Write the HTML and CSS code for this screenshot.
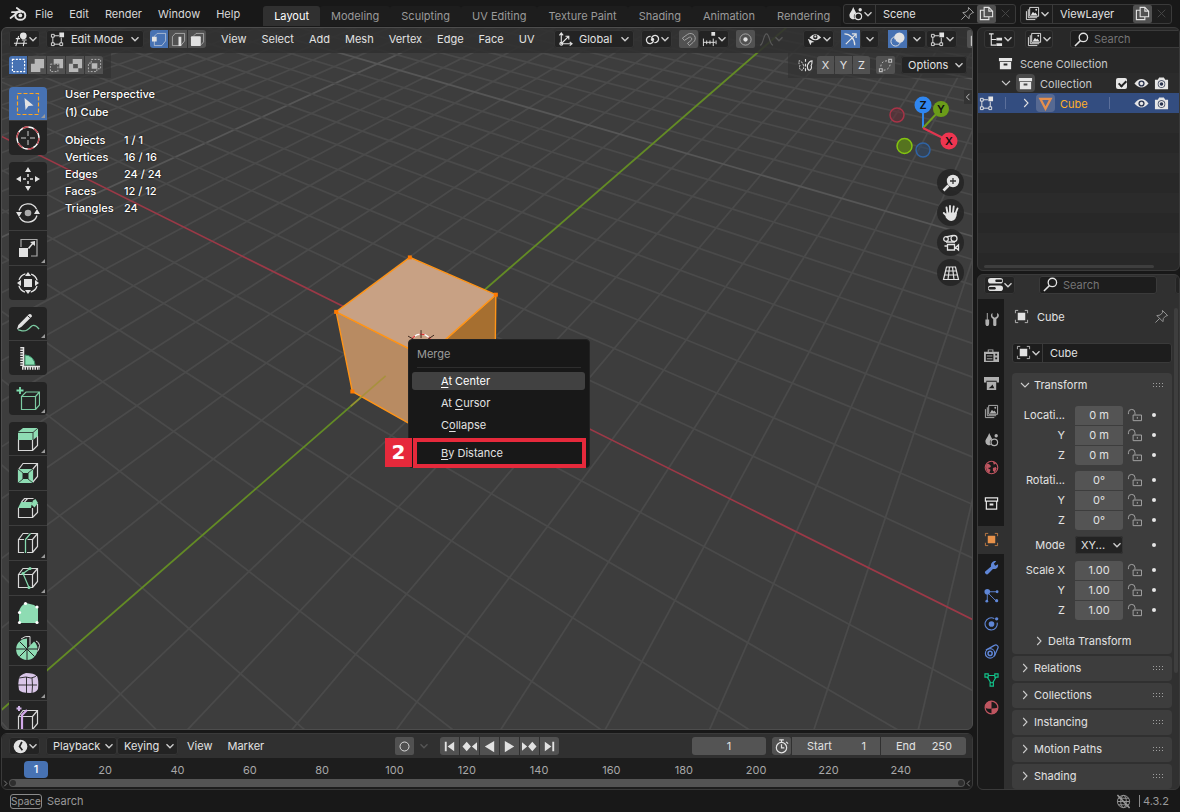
FILE: index.html
```html
<!DOCTYPE html>
<html lang="en">
<head>
<meta charset="utf-8">
<title>Blender</title>
<link rel="stylesheet" href="styles.css">
</head>
<body>
<svg class="sprite" aria-hidden="true">
  <symbol id="logo" viewBox="0 0 18 16"><g fill="none" stroke="currentColor" stroke-linecap="round"><ellipse cx="11.3" cy="9.4" rx="5" ry="4.4" stroke-width="2"/><path d="M1.6 12L8.5 6.6M3 6.2h8M7.8 2l5.8 4.2" stroke-width="1.8"/></g><circle cx="11.3" cy="9.4" r="1.9" fill="currentColor"/></symbol>
  <symbol id="chev" viewBox="0 0 10 10"><path d="M1.5 3.2L5 6.7l3.5-3.5" fill="none" stroke="currentColor" stroke-width="1.4"/></symbol>
  <symbol id="chevr" viewBox="0 0 10 10"><path d="M3.2 1L7 5 3.2 9" fill="none" stroke="currentColor" stroke-width="1.1"/></symbol>
  <symbol id="chevd" viewBox="0 0 10 10"><path d="M1 3l4 4 4-4" fill="none" stroke="currentColor" stroke-width="1.1"/></symbol>
  <symbol id="ed3d" viewBox="0 0 16 16"><path d="M3 7h4.500M1 12h14M6 4.500L3 15M12 9.500l-1 5.500M9.500 8.500h5" fill="none" stroke="currentColor" stroke-width="1.2"/><circle cx="11" cy="4" r="3.6" fill="currentColor"/></symbol>
  <symbol id="editmesh" viewBox="0 0 16 16"><g fill="none" stroke="currentColor"><path d="M1.5 2.5h3v3h-3zM1.5 11.5h3v3h-3zM10.5 11.5h3v3h-3zM4.5 4h5M3 5.5v6M4.5 13h6M12 6v5.5"/></g><path d="M10 .5h5v5h-5z" fill="currentColor"/></symbol>
  <symbol id="selv" viewBox="0 0 16 16"><path d="M2.500 4.500l3-3h9v8l-4 5h-8z" fill="none" stroke="currentColor" opacity=".65"/><path d="M0 5h5v5h-5z" fill="currentColor"/></symbol>
  <symbol id="sele" viewBox="0 0 16 16"><path d="M1.500 5l3-3.500h10v8l-4 5h-9z" fill="none" stroke="currentColor" opacity=".6"/><path d="M8 5h3v10h-3z" fill="currentColor"/></symbol>
  <symbol id="self" viewBox="0 0 16 16"><path d="M4 4l2.500-2.500h8v9l-2.500 3" fill="none" stroke="currentColor" opacity=".6"/><rect x="1" y="4.500" width="10.500" height="10.500" rx="1" fill="currentColor"/></symbol>
  <symbol id="axes" viewBox="0 0 16 16"><g fill="none" stroke="currentColor" stroke-width="1.2"><path d="M3.500 1v11.500H15M1.500 3.500l2-2.500 2 2.500M12.500 10.500l2.500 2-2.500 2M4 12L11 5M8 4.500h3.500V8"/><circle cx="3.500" cy="12.500" r="1.500"/></g></symbol>
  <symbol id="link" viewBox="0 0 16 16"><g fill="none" stroke="currentColor" stroke-width="1.4"><path d="M7 6.500a3.800 3.800 0 1 1 5 4.500l-2 .3"/><path d="M9 9.500a3.800 3.800 0 1 1-5-4.500l2-.3"/></g><circle cx="8" cy="8" r="1.800" fill="currentColor"/></symbol>
  <symbol id="magnet" viewBox="0 0 16 16"><path d="M1.500 6.500l5.500-4a5.200 5.200 0 0 1 6 8.500l-4 3.500-2-2.500 4-3.200a2 2 0 0 0-2.200-3.200L3.500 9z" fill="none" stroke="currentColor"/></symbol>
  <symbol id="snapinc" viewBox="0 0 16 16"><path d="M1.500 7v8M5 9v4M8.500 9v4M12 7v8M1.500 11H14.500M15 9v4" fill="none" stroke="currentColor"/><path d="M10 0h4v4h-4z" fill="currentColor"/></symbol>
  <symbol id="prop" viewBox="0 0 16 16"><circle cx="8" cy="8" r="6" fill="none" stroke="currentColor" opacity=".6"/><circle cx="8" cy="8" r="2.300" fill="currentColor"/></symbol>
  <symbol id="curve" viewBox="0 0 16 16"><path d="M1 14c4 0 3.500-12 7-12s3 12 7 12" fill="none" stroke="currentColor" stroke-width="1.200"/></symbol>
  <symbol id="visib" viewBox="0 0 18 16"><path d="M3 5.500Q10 -2 17 5.500Q10 12 3 5.500z" fill="currentColor"/><circle cx="10" cy="5" r="2.700" fill="#282828"/><circle cx="10" cy="4.500" r="1.200" fill="currentColor"/><path d="M1 7l3 8 1.500-3.500L9 11z" fill="currentColor"/></symbol>
  <symbol id="gizmo" viewBox="0 0 16 16"><path d="M1.500 2c6 0 11 5 11 12M3 13L13.500 2.500M9.500 2h4.500v4.500" fill="none" stroke="currentColor" stroke-width="1.300"/></symbol>
  <symbol id="overlay" viewBox="0 0 16 16"><circle cx="6" cy="10" r="5" fill="none" stroke="currentColor"/><circle cx="10" cy="6" r="5.500" fill="currentColor"/><path d="M5 7.500a5 5 0 0 0 4 4" fill="none" stroke="#4772b3"/></symbol>
  <symbol id="xray" viewBox="0 0 16 16"><path d="M2.500 4.500h9v10h-9zM5 4V1.500h9.500v10H12M7 7v5" fill="none" stroke="currentColor"/></symbol>
  <symbol id="bfly" viewBox="0 0 16 16"><path d="M8 1v3M8 6v3M8 11v3M10 8c2-5 4-5 5-5 0 3 0 4-1 5 1 2 0 5-2 5s-2-2-2-5" fill="none" stroke="currentColor" stroke-width="1.200"/><path d="M6 8C4 3 2 3 1 3c0 3 0 4 1 5-1 2 0 5 2 5s2-2 2-5" fill="none" stroke="currentColor" stroke-dasharray="2 1"/></symbol>
  <symbol id="autom" viewBox="0 0 16 16"><path d="M1.500 11.500h3v3h-3zM11.500 1.500h3v3h-3z" fill="none" stroke="currentColor" stroke-width="1.200"/><path d="M3 9c0-4 3-6 7-6M6 13c4 0 7-3 7-7" fill="none" stroke="currentColor" stroke-dasharray="2 2"/></symbol>
  <symbol id="snew" viewBox="0 0 16 16"><path d="M1.500 1.500h13v13h-13z" fill="none" stroke="currentColor" stroke-width="1.200" stroke-dasharray="2.200 1.400"/></symbol>
  <symbol id="sadd" viewBox="0 0 16 16"><path d="M5 1h10v10h-4v4H1V6h4z" fill="currentColor"/></symbol>
  <symbol id="ssub" viewBox="0 0 16 16"><path d="M5 1h10v10h-4V6H5z" fill="currentColor"/><path d="M1.500 6.500h8v8h-8z" fill="none" stroke="currentColor" stroke-dasharray="2 1.500"/></symbol>
  <symbol id="sdif" viewBox="0 0 16 16"><path fill-rule="evenodd" d="M5 1h10v10h-4v4H1V6h4zM5.500 6.500v4.500h5V6.500z" fill="currentColor"/></symbol>
  <symbol id="sand" viewBox="0 0 16 16"><path d="M5 5.500h6v6H5z" fill="currentColor"/><path d="M4.500 5V1.500h10v10H11M4 5.500H1.500v9h9V12" fill="none" stroke="currentColor" stroke-dasharray="2 1.500"/></symbol>
  <symbol id="scene" viewBox="0 0 16 16"><path d="M5.500 1l3.500 7a3 3 0 0 0-1.500 5.500A4 4 0 0 1 1.500 10c0-2.500 3-5 4-9z" fill="currentColor"/><circle cx="11" cy="11" r="3.500" fill="none" stroke="currentColor" stroke-width="1.300"/><circle cx="13" cy="4" r="1.800" fill="currentColor"/></symbol>
  <symbol id="layers" viewBox="0 0 16 16"><path d="M5 1.500h9.500V11H5zM3.500 3.500v9H13M1.500 5.500v9H11" fill="none" stroke="currentColor"/><path d="M6 10l2.500-4L10 8l1-1 2.500 3z" fill="currentColor"/><circle cx="12" cy="4" r="1" fill="currentColor"/></symbol>
  <symbol id="pin" viewBox="0 0 16 16"><path d="M9 1.500l5.500 5.500-2 .5-2.500 2.500-.5 3.500L3 7l3.500-.5L9 4zM6 10l-4.500 4.500" fill="none" stroke="currentColor"/></symbol>
  <symbol id="copy" viewBox="0 0 16 16"><path d="M5.500 1.500h5l4 4v6h-9zM10.500 1.500v4h4M5 4.500H1.500v10h9V12" fill="none" stroke="currentColor" stroke-width="1.200"/></symbol>
  <symbol id="x" viewBox="0 0 16 16"><path d="M4 4l8 8M12 4l-8 8" stroke="currentColor"/></symbol>
  <symbol id="tree" viewBox="0 0 16 16"><path d="M3.500 2v12H9M3.500 8H9M1 2h5" fill="none" stroke="currentColor" stroke-width="1.200"/><path d="M9 6h6v3H9zM9 12h6v3H9z" fill="currentColor"/></symbol>
  <symbol id="search" viewBox="0 0 16 16"><circle cx="10" cy="5.800" r="4.500" fill="none" stroke="currentColor" stroke-width="1.400"/><path d="M6.800 9.200L1 15" stroke="currentColor" stroke-width="1.600"/></symbol>
  <symbol id="coll" viewBox="0 0 16 16"><path d="M1 2h14v3.500H1z" fill="currentColor"/><path fill-rule="evenodd" d="M2 6.500h12V14H2zM6 8v2h4V8z" fill="currentColor"/></symbol>
  <symbol id="collo" viewBox="0 0 16 16"><path d="M1.500 2h13v3.500h-13zM2.500 5.500h11V14h-11z" fill="none" stroke="currentColor" stroke-width="1.300"/><path d="M6 8h4v2H6z" fill="currentColor"/></symbol>
  <symbol id="eye" viewBox="0 0 16 16"><path d="M0.500 8Q8 -1.500 15.500 8Q8 16.500 .5 8z" fill="currentColor"/><circle cx="8" cy="8" r="3.300" fill="#2b3550"/><circle cx="8" cy="8" r="1.800" fill="currentColor"/></symbol>
  <symbol id="cam" viewBox="0 0 16 16"><path d="M1 4h3l1.500-2.500h5L12 4h3v10H1z" fill="currentColor"/><circle cx="8" cy="8.500" r="4" fill="#2b3550"/><circle cx="8" cy="8.500" r="2.600" fill="none" stroke="currentColor" stroke-width="1.400"/></symbol>
  <symbol id="mesh" viewBox="0 0 16 16"><path d="M2.500 3h11L8 13.500z" fill="none" stroke="#e58f4d" stroke-width="2.400"/></symbol>
  <symbol id="propsed" viewBox="0 0 16 16"><rect x="0" y="1" width="16" height="6" rx="3" fill="currentColor"/><rect x="0" y="9" width="16" height="6" rx="3" fill="currentColor"/><path d="M9 4h5" stroke="#222" stroke-width="2.500" stroke-linecap="round"/><path d="M2 12h5" stroke="#222" stroke-width="2.500" stroke-linecap="round"/></symbol>
  <symbol id="obj" viewBox="0 0 16 16"><path d="M4 4h8v8H4z" fill="currentColor"/><path d="M1.500 4.500v-3h3M11.500 1.500h3v3M14.500 11.500v3h-3M4.500 14.500h-3v-3" fill="none" stroke="currentColor" opacity=".75"/></symbol>
  <symbol id="toolp" viewBox="0 0 16 16"><path d="M3 1h1v7h1.500v4q0 3-2 3t-2-3V8H3z" fill="currentColor"/><path d="M9 1v3.500L11.500 6 14 4.500V1c3 1.500 2 5-.8 6.500V14q-1.700 2-3.400 0V7.500C7 6 6.500 2.500 9 1z" fill="currentColor"/></symbol>
  <symbol id="render" viewBox="0 0 16 16"><path fill-rule="evenodd" d="M0 4h4V1.500h6V4h6v11H0zM2 6.500v7h8v-7zM5 2.500V4h4V2.500zM12 6v2h2V6zM12 10v2h2v-2z" fill="currentColor"/><path d="M3 8.500h6M3 11.500h6" stroke="currentColor"/></symbol>
  <symbol id="output" viewBox="0 0 16 16"><path d="M0 1h16v6h-2.500V5h-11v2H0z" fill="currentColor"/><path fill-rule="evenodd" d="M3 6h10v9H3zM5 13h6L9 9l-1.500 2z" fill="currentColor"/></symbol>
  <symbol id="world" viewBox="0 0 16 16"><circle cx="8" cy="8" r="6.700" fill="none" stroke="currentColor" stroke-width="1.200"/><path d="M2.500 4.500L5 4l2.500 2.500-1 1.500-2.500.5 3 2-1.500 3.500C3 12.500 1.500 9 2.500 4.500zM9.500 8.500l3-1 1 1.500-2 4-2-1.500zM9.500 1.500l3.500 2L10.500 5z" fill="currentColor"/></symbol>
  <symbol id="wrench" viewBox="0 0 16 16"><path d="M1 12.500L7.500 7C6.800 3.500 9.500.5 13 1.200L10.500 4l1.500 2 3-1.500c.5 3.500-2 6-5.500 5L4 15.300C2.500 16 .5 14 1 12.500z" fill="currentColor"/></symbol>
  <symbol id="parts" viewBox="0 0 16 16"><circle cx="3.500" cy="4" r="3" fill="currentColor"/><path d="M3.500 6v8M6 4h8M5 6l8 8" stroke="currentColor"/><circle cx="3" cy="14" r="1.500" fill="currentColor"/><circle cx="13.500" cy="13.500" r="1.700" fill="currentColor"/><circle cx="14" cy="4" r="1.500" fill="currentColor"/></symbol>
  <symbol id="phys" viewBox="0 0 16 16"><path d="M11 2.800A6.500 6.500 0 1 0 14 7" fill="none" stroke="currentColor" stroke-width="1.200"/><circle cx="8" cy="8.500" r="3" fill="currentColor"/><circle cx="13.500" cy="3" r="1.800" fill="currentColor"/></symbol>
  <symbol id="constr" viewBox="0 0 16 16"><path d="M2 6.500L11 1.500a2.500 2.500 0 0 1 3.500 3.500L11 13" fill="none" stroke="currentColor" stroke-width="1.300"/><circle cx="6.500" cy="10" r="5" fill="none" stroke="currentColor" stroke-width="1.300"/><circle cx="6.500" cy="10" r="2.200" fill="none" stroke="currentColor" stroke-width="1.600"/></symbol>
  <symbol id="meshd" viewBox="0 0 16 16"><path d="M1 2h3.500v3.500H1zM11.500 2H15v3.500h-3.500zM6.500 11.500H10V15H6.500zM4.500 3.700h7M3.500 5.500l3.700 6M12.800 5.500l-3.500 6" fill="none" stroke="currentColor" stroke-width="1.200"/></symbol>
  <symbol id="mat" viewBox="0 0 16 16"><circle cx="8" cy="8" r="6.800" fill="none" stroke="currentColor" stroke-width="1.300"/><path d="M8 1a7 7 0 0 0-7 7q3 2 7 1zM8 9q4 0 7-1a7 7 0 0 1-7 7z" fill="currentColor"/></symbol>
  <symbol id="lock" viewBox="0 0 16 16"><path d="M6.500 7.500h9v6h-9zM8.500 7V5a3.500 3.500 0 0 0-7 0v1.500M11 9.500v2" fill="none" stroke="currentColor"/></symbol>
  <symbol id="grip" viewBox="0 0 12 6"><path d="M0 1.500h12M0 4.500h12" stroke="currentColor" stroke-width="1" stroke-dasharray="1 2"/></symbol>
  <symbol id="clock" viewBox="0 0 16 16"><circle cx="8" cy="8" r="7.300" fill="currentColor"/><path d="M9.500 3L7 8l3 4" fill="none" stroke="#232323" stroke-width="1.800"/></symbol>
  <symbol id="ring" viewBox="0 0 16 16"><circle cx="8" cy="8" r="4.800" fill="none" stroke="currentColor"/></symbol>
  <symbol id="tfirst" viewBox="0 0 16 16"><path d="M3 3h2v10H3zM13 3v10L6 8z" fill="currentColor"/></symbol>
  <symbol id="tprev" viewBox="0 0 16 16"><path d="M5 3l4.500 5L5 13 .5 8zM16 3.500v9L10.500 8z" fill="currentColor"/></symbol>
  <symbol id="tback" viewBox="0 0 16 16"><path d="M13 2v12L3 8z" fill="currentColor"/></symbol>
  <symbol id="stopw" viewBox="0 0 16 16"><circle cx="8" cy="9.200" r="5.500" fill="none" stroke="currentColor" stroke-width="1.300"/><path d="M5.500 1h5M8 1v3M8 5.500v4h3M13 3l2 2" fill="none" stroke="currentColor" stroke-width="1.300"/></symbol>
  <symbol id="net" viewBox="0 0 16 16"><g fill="none" stroke="currentColor"><circle cx="8" cy="8" r="6.500"/><ellipse cx="8" cy="8" rx="3" ry="6.500"/><path d="M1.500 8h13M2.500 4.500h11M2.500 11.500h11"/><path d="M1.500 1l13 14" stroke-width="1.600"/></g></symbol>
  <symbol id="t-select" viewBox="0 0 24 24"><path d="M1.500 1.500h21v21h-21z" fill="none" stroke="#ffa51f" stroke-width="1.200" stroke-dasharray="4 2"/><path d="M8.500 6l9 7.500-5 .5-3 4z" fill="currentColor"/></symbol>
  <symbol id="t-cursor" viewBox="0 0 24 24"><circle cx="12" cy="12" r="11" fill="none" stroke="#fff" stroke-width="1.300"/><circle cx="12" cy="12" r="11" fill="none" stroke="#c0404a" stroke-width="1.300" stroke-dasharray="6 5.500"/><path d="M12 5v5M12 14v5M5 12h5M14 12h5" stroke="#ccc"/></symbol>
  <symbol id="t-move" viewBox="0 0 24 24"><path d="M12 0l3 5H9zM12 24l3-5H9zM0 12l5-3v6zM24 12l-5-3v6z" fill="currentColor"/><path d="M12 7v3M12 14v3M7 12h3M14 12h3" stroke="currentColor" stroke-width="1.500"/></symbol>
  <symbol id="t-rot" viewBox="0 0 24 24"><circle cx="12" cy="12" r="3.300" fill="#aaa"/><path d="M3 9.500A9.500 9.500 0 0 1 20.500 8M3.500 16A9.500 9.500 0 0 0 21 14.500" fill="none" stroke="currentColor" stroke-width="1.300"/><path d="M0 11h6l-3 5zM18 13h6l-3-5z" fill="currentColor"/></symbol>
  <symbol id="t-scale" viewBox="0 0 24 24"><path d="M5 11V3.500h16V20h-6" fill="none" stroke="#aaa" stroke-width="1.200"/><path d="M3 12h9v9H3z" fill="currentColor"/><path d="M12.500 12.500l5-6" stroke="currentColor" stroke-width="1.500"/><path d="M19 5v5l-5-4z" fill="currentColor"/></symbol>
  <symbol id="t-trans" viewBox="0 0 24 24"><circle cx="12" cy="12" r="9.500" fill="none" stroke="currentColor" stroke-width="1.300" stroke-dasharray="9 5.900" stroke-dashoffset="-3"/><path d="M8 8h8v8H8z" fill="currentColor"/><path d="M12 1l3 4H9zM12 23l3-4H9zM1 12l4-3v6zM23 12l-4-3v6z" fill="currentColor"/></symbol>
  <symbol id="t-anno" viewBox="0 0 26 24"><path d="M2 18.500c2-1 5 3 10 0s4-5 7-5q3 0 6 4" fill="none" stroke="#7ccba2" stroke-width="1.400"/><path d="M1 18l1.500-5L14 1.500q2.500-1 3.500 2L6 15z" fill="currentColor"/><path d="M12.500 3l3.500 3" stroke="#242424"/></symbol>
  <symbol id="t-meas" viewBox="0 0 24 24"><path d="M9 19V9a10 10 0 0 1 10 10z" fill="#86dcb0" stroke="#3d8f69"/><path d="M6 1v20M6 22h18" stroke="currentColor" stroke-width="3.500" stroke-dasharray="1.500 1"/><path d="M7.500 1v19.500H24" fill="none" stroke="currentColor" stroke-width="1.500"/></symbol>
  <symbol id="t-addc" viewBox="0 0 24 24"><path d="M5.500 9.500h14v13h-14zM5.500 9.500l4.500-4.500h13.500v13l-4 4.500M19.500 9.500L23.500 5" fill="none" stroke="#7ccba2" stroke-width="1.200"/><path d="M4 0v7M.5 3.500h7" stroke="#7fe0b0" stroke-width="1.800"/></symbol>
  <symbol id="cubeo" viewBox="0 0 24 24"><path d="M2.500 8.500h14v13h-14zM2.500 8.500L7 2.500h14.500v13l-5 6M16.500 8.500l5-6" fill="none" stroke="#d8d8d8" stroke-width="1.200"/></symbol>
  <symbol id="t-ext" viewBox="0 0 24 24"><path d="M2.500 12v11.500h14V12M16.500 23.500l5-5V9" fill="none" stroke="#d8d8d8" stroke-width="1.200"/><path d="M2 5l5-4h15v8l-5 4H2z" fill="#8edcb3"/><path d="M2 5.500h15l5-4.500M17 5.500V13" fill="none" stroke="#242424" stroke-width=".8"/></symbol>
  <symbol id="t-inset" viewBox="0 0 24 24"><use href="#cubeo"/><path fill-rule="evenodd" d="M2 8h15v14H2zM6.500 12v6h6v-6z" fill="#8edcb3"/><path d="M2 8l5 4M17 8l-5 4M2 22l5-4M17 22l-5-4" stroke="#222" stroke-width=".8"/></symbol>
  <symbol id="t-bevel" viewBox="0 0 24 24"><path d="M2.500 12v9.500h14V12M16.500 21.500l5-5V8M5.500 6l3-3.500h9M8.500 6l3-3.500" fill="none" stroke="#d8d8d8" stroke-width="1.200"/><path d="M5 6h11l-1 6H2zM17 4.500l2.500-1.500 2.500 4-3.500 4.500-3-3z" fill="#8edcb3"/></symbol>
  <symbol id="t-loop" viewBox="0 0 24 24"><use href="#cubeo"/><path d="M9.500 22V8.500L14.500 2.500" fill="none" stroke="#222" stroke-width="3"/><path d="M9.500 22V8.500L14.500 2.500" fill="none" stroke="#86dcb0" stroke-width="1.300"/></symbol>
  <symbol id="t-knife" viewBox="0 0 24 24"><use href="#cubeo"/><path d="M14 2.500L7 7.500l6 14" fill="none" stroke="#86dcb0" stroke-width="1.200"/><g fill="#86dcb0"><circle cx="14" cy="2.500" r="1.600"/><circle cx="7" cy="7.500" r="1.600"/><circle cx="13" cy="21.500" r="1.600"/></g></symbol>
  <symbol id="t-poly" viewBox="0 0 24 24"><path d="M10 2l8 2 4 3v15H3V10q2-6 7-8z" fill="#8edcb3"/><g fill="#fff"><circle cx="9.500" cy="2.500" r="1.600"/><circle cx="21" cy="6" r="1.600"/><circle cx="3.500" cy="11.500" r="1.600"/><circle cx="3.500" cy="21.500" r="1.600"/><circle cx="21" cy="21.500" r="1.600"/></g></symbol>
  <symbol id="t-spin" viewBox="0 0 24 24"><path d="M11 13V2.500A10.700 10.700 0 1 0 21.500 13L18 6z" fill="#8edcb3"/><path d="M11 2.500V13l7-7.500L22 13h-2z" fill="#242424"/><path d="M11 13l7-7.500q3.500 3 3.500 7.500z" fill="#8edcb3"/><path d="M11 13V24M11 13L3.500 20.500M11 13l7.500 7.500M11 13H0M11 13h11M11 13L3.500 5.500" stroke="#242424"/><path d="M5 3Q9-.5 14 .5v9M20 5q3 1 3.500 4.500-.5 4-2 6" fill="none" stroke="#ddd"/></symbol>
  <symbol id="t-smooth" viewBox="0 0 24 24"><path d="M3 7q1-3 7-5 8 0 11 3 2 4 1 13-2 4-8 4-9 0-11-3-1.500-6 0-12z" fill="#d9c6e8"/><path d="M3 7q8-2 12 0 5-1 6-3M10.500 6v16M2 14h19M16 7q1 8 0 15" fill="none" stroke="#222" stroke-width=".9"/></symbol>
  <symbol id="t-slide" viewBox="0 0 24 24"><use href="#cubeo" y="2"/><path d="M6 23V9l5-5" fill="none" stroke="#d2a9ea" stroke-width="2.200"/><path d="M3 0v5M.5 2.500h5" stroke="#d2b5ea" stroke-width="2"/></symbol>
  <symbol id="v-zoom" viewBox="0 0 18 18"><circle cx="11" cy="7" r="6.200" fill="currentColor"/><path d="M6.500 11.500L1.500 16.500" stroke="currentColor" stroke-width="2.600"/><path d="M11 4v6M8 7h6" stroke="#333" stroke-width="1.300"/></symbol>
  <symbol id="v-hand" viewBox="0 0 18 18"><path d="M5.500 9L4.500 3.500M8 8.500V2M11 8.500l.7-6M13.500 9.500l2-5M6 13L1.800 9" stroke="currentColor" stroke-width="1.900" stroke-linecap="round"/><path d="M4.500 8.500h10.500q-.5 8-5.500 8.500-3.500 0-6-4z" fill="currentColor"/></symbol>
  <symbol id="v-cam" viewBox="0 0 18 18"><g fill="none" stroke="currentColor" stroke-width="1.300"><circle cx="4" cy="5" r="2.300"/><circle cx="12" cy="4.500" r="3"/><path d="M4 2.800L11 1.500M4 8h9M5.500 10.500h7v5.500h-7zM2.500 12h3M16.500 11v5l-3-2.500z"/></g></symbol>
  <symbol id="v-grid" viewBox="0 0 18 18"><path d="M4.500 3h9l3 12.500h-15zM3.500 7h11M2.500 11h13M7.500 3l-1.500 12.500M10.500 3l1.500 12.500" fill="none" stroke="currentColor" stroke-width="1.200"/></symbol>
</svg>

<div class="app">
  <header class="topbar">
    <svg class="logo"><use href="#logo"/></svg>
    <nav class="menus" aria-label="Main menu">
      <button>File</button><button>Edit</button><button>Render</button><button>Window</button><button>Help</button>
    </nav>
    <div class="tabs" role="tablist">
      <button class="tab active" role="tab">Layout</button><button class="tab" role="tab">Modeling</button><button class="tab" role="tab">Sculpting</button><button class="tab" role="tab">UV Editing</button><button class="tab" role="tab">Texture Paint</button><button class="tab" role="tab">Shading</button><button class="tab" role="tab">Animation</button><button class="tab" role="tab">Rendering</button>
    </div>
    <div class="datablock scene">
      <button class="drop" aria-label="Browse scene"><svg class="ic"><use href="#scene"/></svg><svg class="chev"><use href="#chev"/></svg></button>
      <input aria-label="Scene name" value="Scene">
      <button class="sq pin" aria-label="Pin scene"><svg class="ic"><use href="#pin"/></svg></button>
      <button class="sq lit" aria-label="New scene"><svg class="ic"><use href="#copy"/></svg></button>
      <button class="sq dim" aria-label="Delete scene"><svg class="ic"><use href="#x"/></svg></button>
    </div>
    <div class="datablock layer">
      <button class="drop" aria-label="Browse view layer"><svg class="ic"><use href="#layers"/></svg><svg class="chev"><use href="#chev"/></svg></button>
      <input aria-label="View layer name" value="ViewLayer">
      <button class="sq lit" aria-label="New view layer"><svg class="ic"><use href="#copy"/></svg></button>
      <button class="sq dim" aria-label="Remove view layer"><svg class="ic"><use href="#x"/></svg></button>
    </div>
  </header>

  <div class="workspace">
    <div class="left-col">
      <main class="viewport">
        <svg class="canvas" id="canvas" aria-label="3D viewport"></svg>
        <div class="vhead">
          <div class="vleft">
            <button class="drop box" aria-label="Editor type"><svg class="ic"><use href="#ed3d"/></svg><svg class="chev"><use href="#chev"/></svg></button>
            <label class="pick mode"><svg class="ic"><use href="#editmesh"/></svg><select aria-label="Mode"><option>Edit Mode</option></select><svg class="chev"><use href="#chev"/></svg></label>
            <div class="seg"><button class="on" aria-label="Vertex select"><svg class="ic"><use href="#selv"/></svg></button><button aria-label="Edge select"><svg class="ic"><use href="#sele"/></svg></button><button aria-label="Face select"><svg class="ic"><use href="#self"/></svg></button></div>
            <nav class="vmenus" aria-label="Viewport menu"><button>View</button><button>Select</button><button>Add</button><button>Mesh</button><button>Vertex</button><button>Edge</button><button>Face</button><button>UV</button></nav>
          </div>
          <div class="vmid">
            <label class="pick orient"><svg class="ic"><use href="#axes"/></svg><select aria-label="Orientation"><option>Global</option></select><svg class="chev"><use href="#chev"/></svg></label>
            <button class="drop box" aria-label="Pivot"><svg class="ic"><use href="#link"/></svg><svg class="chev"><use href="#chev"/></svg></button>
            <div class="pair"><button class="sq lit soft" aria-label="Snap"><svg class="ic"><use href="#magnet"/></svg></button><button class="drop box" aria-label="Snap to"><svg class="ic"><use href="#snapinc"/></svg><svg class="chev"><use href="#chev"/></svg></button></div>
            <div class="pair"><button class="sq lit" aria-label="Proportional editing"><svg class="ic"><use href="#prop"/></svg></button><button class="drop faded" aria-label="Falloff"><svg class="ic"><use href="#curve"/></svg><svg class="chev"><use href="#chev"/></svg></button></div>
          </div>
          <div class="vright">
            <button class="drop box" aria-label="Visibility"><svg class="ic"><use href="#visib"/></svg><svg class="chev"><use href="#chev"/></svg></button>
            <div class="pair"><button class="sq on" aria-label="Gizmos"><svg class="ic"><use href="#gizmo"/></svg></button><button class="sq box" aria-label="Gizmo options"><svg class="chev"><use href="#chev"/></svg></button></div>
            <div class="pair"><button class="sq on" aria-label="Overlays"><svg class="ic"><use href="#overlay"/></svg></button><button class="sq box" aria-label="Overlay options"><svg class="chev"><use href="#chev"/></svg></button><button class="drop box" aria-label="Edit overlays"><svg class="ic"><use href="#editmesh"/></svg><svg class="chev"><use href="#chev"/></svg></button></div>
            <button class="sq lit" aria-label="X-ray"><svg class="ic"><use href="#xray"/></svg></button>
          </div>
        </div>
        <div class="vsub">
          <div class="subleft"><div class="seg"><button class="on" aria-label="Set"><svg class="ic"><use href="#snew"/></svg></button><button aria-label="Extend"><svg class="ic"><use href="#sadd"/></svg></button><button aria-label="Subtract"><svg class="ic"><use href="#ssub"/></svg></button><button aria-label="Difference"><svg class="ic"><use href="#sdif"/></svg></button><button aria-label="Intersect"><svg class="ic"><use href="#sand"/></svg></button></div></div>
          <div class="subright">
            <svg class="ic"><use href="#bfly"/></svg>
            <div class="seg xyz"><button>X</button><button>Y</button><button>Z</button></div>
            <button class="sq lit" aria-label="Auto merge"><svg class="ic"><use href="#autom"/></svg></button>
            <button class="textdrop">Options<svg class="chev"><use href="#chev"/></svg></button>
          </div>
        </div>
        <div class="vbody">
          <div class="tools" role="toolbar" aria-label="Tools">
            <div class="tgroup">
              <button class="on more" aria-label="Select box"><svg><use href="#t-select"/></svg></button>
              <button aria-label="Cursor"><svg><use href="#t-cursor"/></svg></button>
            </div>
            <div class="tgroup">
              <button aria-label="Move"><svg><use href="#t-move"/></svg></button>
              <button aria-label="Rotate"><svg><use href="#t-rot"/></svg></button>
              <button class="more" aria-label="Scale"><svg><use href="#t-scale"/></svg></button>
              <button aria-label="Transform"><svg><use href="#t-trans"/></svg></button>
            </div>
            <div class="tgroup">
              <button class="more" aria-label="Annotate"><svg><use href="#t-anno"/></svg></button>
              <button aria-label="Measure"><svg><use href="#t-meas"/></svg></button>
            </div>
            <div class="tgroup">
              <button class="more" aria-label="Add cube"><svg><use href="#t-addc"/></svg></button>
            </div>
            <div class="tgroup">
              <button class="more" aria-label="Extrude region"><svg><use href="#t-ext"/></svg></button>
              <button aria-label="Inset faces"><svg><use href="#t-inset"/></svg></button>
              <button aria-label="Bevel"><svg><use href="#t-bevel"/></svg></button>
              <button class="more" aria-label="Loop cut"><svg><use href="#t-loop"/></svg></button>
              <button class="more" aria-label="Knife"><svg><use href="#t-knife"/></svg></button>
              <button aria-label="Poly build"><svg><use href="#t-poly"/></svg></button>
              <button aria-label="Spin"><svg><use href="#t-spin"/></svg></button>
              <button class="more" aria-label="Smooth"><svg><use href="#t-smooth"/></svg></button>
              <button class="more" aria-label="Edge slide"><svg><use href="#t-slide"/></svg></button>
            </div>
          </div>
          <div class="stats">
            <p>User Perspective</p>
            <p>(1) Cube</p>
            <dl><dt>Objects</dt><dd>1 / 1</dd><dt>Vertices</dt><dd>16 / 16</dd><dt>Edges</dt><dd>24 / 24</dd><dt>Faces</dt><dd>12 / 12</dd><dt>Triangles</dt><dd>24</dd></dl>
          </div>
          <div class="nav3d">
            <svg class="gizmo" viewBox="0 0 76 68">
              <g stroke-width="2"><path d="M37 34V11" stroke="#2f86ea"/><path d="M37 34L54 16" stroke="#6f9e1d"/><path d="M37 34l26 13" stroke="#e0364f"/></g>
              <circle cx="11" cy="21" r="7" fill="#6a2b36" fill-opacity=".5" stroke="#a83347" stroke-width="1.500"/>
              <circle cx="37" cy="56" r="7" fill="#2c4a70" fill-opacity=".5" stroke="#2f63a3" stroke-width="1.500"/>
              <circle cx="18.500" cy="52" r="7.500" fill="#55731f" stroke="#83c410" stroke-width="1.500"/>
              <circle cx="55" cy="15" r="8" fill="#6b9c19"/><circle cx="37" cy="11" r="8.500" fill="#2f86f0"/><circle cx="63" cy="47" r="8.500" fill="#ef3550"/>
              <g class="axl"><text x="37" y="15">Z</text><text x="55" y="19">Y</text><text x="63" y="51">X</text></g>
            </svg>
            <button aria-label="Zoom"><svg><use href="#v-zoom"/></svg></button>
            <button aria-label="Pan"><svg><use href="#v-hand"/></svg></button>
            <button aria-label="Camera view"><svg><use href="#v-cam"/></svg></button>
            <button aria-label="Perspective"><svg><use href="#v-grid"/></svg></button>
          </div>
          <button class="expand" aria-label="Show sidebar"><svg class="flip"><use href="#chevr"/></svg></button>
        </div>
        <div class="menu" role="menu">
          <p>Merge</p>
          <button class="hover" role="menuitem"><span><u>A</u>t Center</span></button>
          <button role="menuitem"><span>At <u>C</u>ursor</span></button>
          <button role="menuitem"><span>C<u>o</u>llapse</span></button>
          <button class="last" role="menuitem"><span><u>B</u>y Distance</span></button>
          <b class="step">2</b>
        </div>
      </main>

      <section class="timeline">
        <div class="thead">
          <button class="drop box" aria-label="Editor type"><svg class="ic"><use href="#clock"/></svg><svg class="chev"><use href="#chev"/></svg></button>
          <div class="tdrops"><button class="textdrop">Playback<svg class="chev"><use href="#chev"/></svg></button><button class="textdrop">Keying<svg class="chev"><use href="#chev"/></svg></button></div>
          <nav class="tmenus" aria-label="Timeline menu"><button>View</button><button>Marker</button></nav>
          <div class="pair rec"><button class="sq lit" aria-label="Auto keying"><svg class="ic"><use href="#ring"/></svg></button><button class="sq faded" aria-label="Auto keying options"><svg class="chev"><use href="#chev"/></svg></button></div>
          <div class="seg play"><button aria-label="Jump to start"><svg class="ic"><use href="#tfirst"/></svg></button><button aria-label="Previous keyframe"><svg class="ic"><use href="#tprev"/></svg></button><button aria-label="Play backwards"><svg class="ic"><use href="#tback"/></svg></button><button aria-label="Play"><svg class="ic flip"><use href="#tback"/></svg></button><button aria-label="Next keyframe"><svg class="ic flip"><use href="#tprev"/></svg></button><button aria-label="Jump to end"><svg class="ic flip"><use href="#tfirst"/></svg></button></div>
          <input class="frame" aria-label="Current frame" value="1">
          <div class="range"><button class="sq lit" aria-label="Preview range"><svg class="ic"><use href="#stopw"/></svg></button><label>Start<input value="1"></label><label>End<input value="250"></label></div>
        </div>
        <div class="ruler"><span class="now"><b>1</b></span><span>20</span><span>40</span><span>60</span><span>80</span><span>100</span><span>120</span><span>140</span><span>160</span><span>180</span><span>200</span><span>220</span><span>240</span></div>
        <div class="tscroll"><svg><use href="#chevr"/></svg><div class="track"><i></i><i></i></div><svg class="flip"><use href="#chevr"/></svg></div>
      </section>
    </div>

    <aside class="right-col">
      <section class="outliner">
        <div class="phead">
          <button class="drop box" aria-label="Editor type"><svg class="ic"><use href="#tree"/></svg><svg class="chev"><use href="#chev"/></svg></button>
          <button class="drop box disp" aria-label="Display mode"><svg class="ic"><use href="#layers"/></svg><svg class="chev"><use href="#chev"/></svg></button>
          <label class="search osearch"><svg class="ic"><use href="#search"/></svg><input aria-label="Search outliner" placeholder="Search"></label>
        </div>
        <ul class="tree">
          <li class="r0"><svg class="ic"><use href="#coll"/></svg><span>Scene Collection</span></li>
          <li class="r1"><svg class="chv"><use href="#chevd"/></svg><i class="tile"><svg class="ic"><use href="#coll"/></svg></i><span>Collection</span><input type="checkbox" checked aria-label="Include collection"><svg class="ic"><use href="#eye"/></svg><svg class="ic"><use href="#cam"/></svg></li>
          <li class="r2"><svg class="ic em"><use href="#editmesh"/></svg><i class="bar"></i><svg class="chv"><use href="#chevr"/></svg><i class="tile"><svg class="ic"><use href="#mesh"/></svg></i><span>Cube</span><i class="bar"></i><svg class="ic eye2"><use href="#eye"/></svg><svg class="ic"><use href="#cam"/></svg></li>
        </ul>
        <div class="hbar"></div>
      </section>

      <section class="props">
        <div class="phead">
          <button class="drop box" aria-label="Editor type"><svg class="ic"><use href="#propsed"/></svg><svg class="chev"><use href="#chev"/></svg></button>
          <label class="search psearch"><svg class="ic"><use href="#search"/></svg><input aria-label="Search properties" placeholder="Search"></label>
          <button class="sq box optb" aria-label="Options"></button>
        </div>
        <div class="pbody">
          <div class="ptabs" role="tablist" aria-label="Properties tabs">
            <button class="sp" aria-label="Tool"><svg><use href="#toolp"/></svg></button>
            <button aria-label="Render"><svg><use href="#render"/></svg></button>
            <button aria-label="Output"><svg><use href="#output"/></svg></button>
            <button aria-label="View layer"><svg><use href="#layers"/></svg></button>
            <button aria-label="Scene"><svg><use href="#scene"/></svg></button>
            <button class="red sp" aria-label="World"><svg><use href="#world"/></svg></button>
            <button class="white sp" aria-label="Collection"><svg><use href="#collo"/></svg></button>
            <button class="orange sel" aria-label="Object"><svg><use href="#obj"/></svg></button>
            <button class="blue" aria-label="Modifiers"><svg><use href="#wrench"/></svg></button>
            <button class="blue" aria-label="Particles"><svg><use href="#parts"/></svg></button>
            <button class="blue" aria-label="Physics"><svg><use href="#phys"/></svg></button>
            <button class="blue" aria-label="Constraints"><svg><use href="#constr"/></svg></button>
            <button class="green" aria-label="Data"><svg><use href="#meshd"/></svg></button>
            <button class="red" aria-label="Material"><svg><use href="#mat"/></svg></button>
          </div>
          <div class="pmain">
            <div class="crumb"><svg class="ic"><use href="#obj"/></svg><span>Cube</span><svg class="ic pinc"><use href="#pin"/></svg></div>
            <div class="datablock name"><button class="drop" aria-label="Browse object"><svg class="ic"><use href="#obj"/></svg><svg class="chev"><use href="#chev"/></svg></button><input aria-label="Object name" value="Cube"></div>
            <div class="panel open">
              <button class="ptitle"><svg class="chv"><use href="#chevd"/></svg>Transform<svg class="grip"><use href="#grip"/></svg></button>
              <div class="fields">
                <div class="fg">
                  <label>Locati...<input value="0 m"><svg class="ic"><use href="#lock"/></svg><i></i></label>
                  <label>Y<input value="0 m"><svg class="ic"><use href="#lock"/></svg><i></i></label>
                  <label>Z<input value="0 m"><svg class="ic"><use href="#lock"/></svg><i></i></label>
                </div>
                <div class="fg">
                  <label>Rotati...<input value="0°"><svg class="ic"><use href="#lock"/></svg><i></i></label>
                  <label>Y<input value="0°"><svg class="ic"><use href="#lock"/></svg><i></i></label>
                  <label>Z<input value="0°"><svg class="ic"><use href="#lock"/></svg><i></i></label>
                </div>
                <div class="fg">
                  <label>Mode<span class="pick rot"><select><option>XY...</option></select><svg class="chev"><use href="#chev"/></svg></span><svg class="ic"></svg><i></i></label>
                </div>
                <div class="fg">
                  <label>Scale X<input value="1.00"><svg class="ic"><use href="#lock"/></svg><i></i></label>
                  <label>Y<input value="1.00"><svg class="ic"><use href="#lock"/></svg><i></i></label>
                  <label>Z<input value="1.00"><svg class="ic"><use href="#lock"/></svg><i></i></label>
                </div>
              </div>
              <button class="ptitle sub"><svg class="chv"><use href="#chevr"/></svg>Delta Transform</button>
            </div>
            <div class="panel"><button class="ptitle"><svg class="chv"><use href="#chevr"/></svg>Relations<svg class="grip"><use href="#grip"/></svg></button></div>
            <div class="panel"><button class="ptitle"><svg class="chv"><use href="#chevr"/></svg>Collections<svg class="grip"><use href="#grip"/></svg></button></div>
            <div class="panel"><button class="ptitle"><svg class="chv"><use href="#chevr"/></svg>Instancing<svg class="grip"><use href="#grip"/></svg></button></div>
            <div class="panel"><button class="ptitle"><svg class="chv"><use href="#chevr"/></svg>Motion Paths<svg class="grip"><use href="#grip"/></svg></button></div>
            <div class="panel"><button class="ptitle"><svg class="chv"><use href="#chevr"/></svg>Shading<svg class="grip"><use href="#grip"/></svg></button></div>
          </div>
          <div class="vbar"><i></i></div>
        </div>
      </section>
    </aside>
  </div>

  <footer class="status"><kbd>Space</kbd><span>Search</span><svg class="ic net"><use href="#net"/></svg><span class="ver">4.3.2</span></footer>
</div>
<script src="viewport.js"></script>
</body>
</html>
```
FILE: styles.css
```css
* { box-sizing: border-box; }
html, body { height: 100%; margin: 0; }
body { background: #181818; color: #e2e2e2; font: 11px/16px Inter, "Liberation Sans", sans-serif; overflow: hidden; }
button, input, select { font: inherit; color: inherit; background: none; border: 0; margin: 0; padding: 0; min-width: 0; outline: 0; }
button, label { display: flex; align-items: center; white-space: nowrap; }
svg { flex: none; display: block; }
p, dl, dd, ul { margin: 0; padding: 0; }
i { font-style: normal; }
select { appearance: none; flex: 1; }
.sprite { position: absolute; width: 0; height: 0; }
.ic { width: 15px; height: 15px; }
.chev { width: 10px; height: 10px; color: #ccc; }
.flip { transform: scaleX(-1); }

.app { height: 100vh; display: flex; flex-direction: column; }

/* Top bar */
.topbar { height: 27px; flex: none; display: flex; align-items: center; padding: 0 8px 0 9px; }
.logo { width: 18px; height: 16px; }
.menus { display: flex; margin-left: 1px; }
.menus button { height: 20px; padding: 0 8px; color: #d8d8d8; }
.menus button:first-child { padding-left: 7px; }
.tabs { display: flex; align-self: flex-end; flex: 1; margin-left: 15px; padding-bottom: 1px; }
.tab { height: 20px; padding: 0 11px; border-radius: 3px 3px 0 0; background: #1d1d1d; color: #9a9a9a; }
.tab.active { background: #303030; color: #fff; }
.datablock { display: flex; height: 20px; background: #1d1d1d; border: 1px solid #3a3a3a; border-radius: 3px; overflow: hidden; }
.datablock input { flex: 1; padding-left: 7px; border-left: 1px solid #3a3a3a; }
.datablock.scene { width: 173px; }
.datablock.layer { width: 152px; margin-left: 4px; }
.drop { height: 18px; width: 31px; flex: none; justify-content: space-between; padding: 0 3px 0 4px; }
.sq { width: 19px; height: 18px; flex: none; justify-content: center; }
.box { background: #232323; border-radius: 3px; box-shadow: inset 0 0 0 1px #353535; }
.lit { background: #515151; border-radius: 2px; }
.soft, .pin { color: #a8a8a8; }
.dim { color: #484848; }
.on { background: #4772b3; }
.faded { color: #5a5a5a; }
.faded .chev { color: #555; }
.pair { display: flex; }

/* Work areas */
.workspace { flex: 1; min-height: 0; display: flex; gap: 4px; padding-left: 1px; }
.left-col { flex: 1; min-width: 0; display: flex; flex-direction: column; gap: 3px; }
.right-col { width: 203px; flex: none; display: flex; flex-direction: column; gap: 3px; }
.viewport { position: relative; flex: 1; min-height: 0; display: flex; flex-direction: column; background: #3d3d3d; border: 1px solid #4d4d4d; border-radius: 6px; overflow: hidden; }
.canvas { position: absolute; inset: 0; width: 100%; height: 100%; }
.vhead, .vsub, .vbody { position: relative; display: flex; }
.vhead { height: 25px; flex: none; padding: 2px 0 0 7px; background: rgba(48,48,48,.88); }
.vleft, .vmid, .vright { display: flex; align-items: flex-start; }
.vleft { flex: 1; min-width: 0; gap: 6px; overflow: hidden; }
.vmid { gap: 7px; }
.vright { gap: 7px; margin: 0 -14px 0 17px; }
.vright .pair + .sq { margin-left: 3px; }
.vright .pair + .pair { margin-left: 2px; }
.pick { height: 18px; padding: 0 4px; gap: 6px; background: #232323; border-radius: 3px; box-shadow: inset 0 0 0 1px #353535; }
.mode { width: 98px; }
.orient { width: 80px; }
.seg { display: flex; gap: 1px; border-radius: 3px; overflow: hidden; }
.seg button { width: 18px; height: 18px; justify-content: center; background: #515151; }
.seg button.on { background: #4772b3; }
.vmenus { display: flex; gap: 1px; margin-left: 2px; }
.vmenus button { height: 18px; padding: 0 7px; }
.vsub { flex: none; height: 25px; justify-content: space-between; }
.subleft, .subright { display: flex; background: rgba(48,48,48,.6); }
.subleft { padding: 3px 8px 0 7px; }
.subleft .ic { color: #b8b8b8; }
.subleft .on .ic { color: #fff; }
.subright { padding: 3px 5px 0 10px; gap: 6px; }
.subright > .ic { margin-top: 2px; }
.subright .sq .ic { color: #bbb; }
.xyz { margin-left: -2px; }
.xyz button { width: 17px; }
.textdrop { height: 18px; padding: 0 3px 0 7px; justify-content: space-between; background: #232323; border-radius: 3px; box-shadow: inset 0 0 0 1px #353535; }
.subright .textdrop { width: 66px; }
.vbody { flex: 1; min-height: 0; padding: 9px 0 0 7px; }

.tools { width: 38px; display: flex; flex-direction: column; gap: 7px; }
.tgroup { flex: none; display: flex; flex-direction: column; gap: 1px; border-radius: 4px; overflow: hidden; background: #3d3d3d; }
.tgroup button { position: relative; height: 34px; justify-content: center; background: #242424; }
.tgroup button:first-child { height: 33px; }
.tgroup button.on { background: #4772b3; }
.tgroup svg { width: 24px; height: 24px; }
.more::after { content: ""; position: absolute; right: 2px; bottom: 2px; border: 2px solid transparent; border-right-color: #9a9a9a; border-bottom-color: #9a9a9a; }

.stats { flex: 1; margin-left: 18px; color: #fff; font-weight: 500; text-shadow: 0 0 2px #000; line-height: 17px; }
.stats p { height: 18px; }
.stats p:first-child { margin-top: -1px; }
.stats dl { display: grid; grid-template-columns: 59px auto; margin-top: 10px; }
.nav3d { display: flex; flex-direction: column; align-items: flex-end; gap: 3px; width: 76px; margin: 7px 8px 0 0; }
.gizmo { width: 76px; height: 68px; margin: 0 2px 4px 0; }
.axl { font-weight: 600; font-size: 11px; fill: #111; text-anchor: middle; }
.nav3d button { width: 27px; height: 27px; border-radius: 50%; background: rgba(35,35,35,.85); justify-content: center; }
.nav3d button svg { width: 18px; height: 18px; }
.expand { position: absolute; right: 0; top: 12px; height: 14px; color: #ccc; background: #333; }
.expand svg { width: 8px; height: 10px; }

/* Merge popup */
.menu { position: absolute; left: 406px; top: 311px; width: 182px; padding: 5px 4px 3px 3px; background: #181818; border: 1px solid #222; border-radius: 4px; }
.menu p { height: 23px; margin: 0 4px 4px 5px; padding-top: 1px; color: #9c9c9c; border-bottom: 1px solid #2e2e2e; }
.menu button { width: 100%; height: 18px; margin-bottom: 4px; padding-left: 29px; border-radius: 3px; }
.menu .hover { background: #414141; color: #fff; }
.menu u { text-underline-offset: 2px; }
.menu .last { width: 173px; height: 30px; margin: 2px 0 -4px 1px; padding-left: 24px; border: 4px solid #e6293b; border-radius: 0; }
.step { position: absolute; right: 177px; bottom: 0; width: 27px; height: 29px; background: #e6293b; color: #fff; font: 700 20px/28px "DejaVu Sans", sans-serif; text-align: center; }

/* Timeline */
.timeline { flex: none; background: #1d1d1d; border: 1px solid #3a3a3a; border-radius: 6px; overflow: hidden; }
.thead { display: flex; align-items: flex-start; height: 24px; padding: 3px 6px 0 7px; background: #303030; }
.tdrops { display: flex; margin-left: 6px; }
.tdrops button:first-child { width: 71px; }
.tdrops button:last-child { width: 61px; }
.tmenus { display: flex; flex: 1; margin-left: 2px; }
.tmenus button { height: 18px; padding: 0 8px 0 7px; }
.rec { margin-right: 6px; }
.rec .sq + .sq { width: 20px; }
.play button { width: 19px; }
.thead input { text-align: right; }
.thead .frame { width: 74px; height: 18px; margin: 0 6px 0 133px; text-align: center; background: #545454; border-radius: 3px; }
.range { display: flex; gap: 1px; border-radius: 3px; overflow: hidden; }
.range label { height: 18px; background: #545454; padding: 0 14px 0 15px; width: 88px; }
.range label + label { width: 85px; }
.range input { width: 0; flex: 1; }
.ruler { display: flex; height: 21px; align-items: center; padding: 3px 35px 1px 0; color: #a8a8a8; }
.ruler span { flex: 1; text-align: center; }
.ruler .now { flex: 0 0 67px; display: flex; justify-content: center; padding-left: 1px; }
.now b { width: 24px; height: 17px; border-radius: 4px; background: #4772b3; color: #fff; font-weight: 500; }
.tscroll { display: flex; align-items: center; height: 10px; padding-bottom: 2px; color: #999; }
.tscroll svg { width: 7px; height: 9px; }
.track { flex: 1; height: 8px; border-radius: 4px; background: #545454; display: flex; justify-content: space-between; align-items: center; padding: 0 1px; }
.track i { width: 6px; height: 6px; border-radius: 50%; background: #2e2e2e; }

/* Outliner */
.outliner, .props { background: #282828; border: 1px solid #3a3a3a; border-radius: 6px; min-height: 0; overflow: hidden; display: flex; flex-direction: column; }
.outliner { flex: 243 1 0; }
.props { flex: 517 1 0; background: #303030; }
.phead { display: flex; height: 25px; flex: none; padding: 2px 0 0 6px; overflow: hidden; }
.props .phead { height: 24px; padding-top: 1px; }
.phead .disp { margin-left: 10px; width: 28px; padding: 0 1px 0 2px; }
.search { height: 18px; flex: none; padding: 0 4px; gap: 5px; background: #1d1d1d; border-radius: 3px; box-shadow: inset 0 0 0 1px #3a3a3a; }
.search input::placeholder { color: #757575; }
.search input { width: 70px; }
.osearch { width: 112px; margin-left: 17px; }
.psearch { width: 118px; margin-left: 24px; }
.optb { margin-left: 18px; }
.tree { flex: 1; list-style: none; background: repeating-linear-gradient(#282828 0 20px, #2b2b2b 20px 40px); }
.tree li { display: flex; align-items: center; height: 20px; padding-right: 10px; color: #c8c8c8; }
.tree .ic { color: #e6e6e6; }
.tree .ic + .ic { margin-left: 5px; }
.tree span { padding-top: 1px; }
.tree .r0 { padding-left: 20px; }
.tree .r0 .ic { margin-right: 7px; }
.tree .r1 { padding-left: 23px; }
.tree .r2 { background: #334d80; color: #ffaf29; padding-left: 1px; }
.tree .r1 span { flex: 1; }
.chv { width: 10px; height: 10px; }
.tile { width: 19px; height: 18px; margin: 0 5px 0 5px; display: flex; align-items: center; justify-content: center; background: #4a4a4a; border-radius: 4px; }
.r2 .tile { background: #566992; margin-left: 5px; }
.em { margin-right: 11px; }
.bar { width: 1px; height: 12px; background: #5b6f9a; margin-right: 15px; }
.r2 .chv { color: #e0e0e0; }
.r2 span { flex: 1; }
.r2 .bar + .ic { margin-left: 9px; }
.tree input[type=checkbox] { appearance: none; width: 11px; height: 11px; margin-right: 7px; border-radius: 2px; background: #e6e6e6; }
.tree input:checked::before { content: ""; display: block; width: 3px; height: 6px; margin: 1px 0 0 4px; border: solid #222; border-width: 0 2px 2px 0; transform: rotate(45deg); }
.hbar { height: 3px; margin: 0 25px 2px 6px; background: #3e3e3e; border-radius: 2px; }

/* Properties */
.pbody { flex: 1; min-height: 0; display: flex; }
.ptabs { width: 26px; flex: none; background: #1a1a1a; padding-top: 7px; color: #b0b0b0; }
.ptabs button { width: 100%; height: 28px; justify-content: center; }
.ptabs svg { width: 15px; height: 15px; }
.ptabs .sp { margin-bottom: 8px; }
.ptabs .white { color: #e6e6e6; }
.ptabs .orange { color: #e8924a; }
.ptabs .sel { background: #303030; }
.ptabs .blue { color: #5f86d6; }
.ptabs .green { color: #12c48b; }
.ptabs .red { color: #bf5560; }
.pmain { flex: 1; min-width: 0; padding: 8px 0 0 8px; display: flex; flex-direction: column; gap: 2px; overflow: hidden; }
.crumb { display: flex; align-items: center; height: 20px; padding: 0 3px 0 2px; gap: 8px; }
.crumb span { flex: 1; }
.pinc { color: #999; }
.name { height: 20px; flex: none; margin: 14px 0 8px; }
.name .drop { width: 29px; padding: 0 1px 0 3px; }
.panel { flex: none; background: #3d3d3d; border-radius: 4px; }
.ptitle { width: 100%; height: 25px; padding: 0 7px 0 8px; gap: 4px; }
.ptitle .chv { color: #ccc; }
.grip { width: 12px; height: 6px; margin-left: auto; color: #a0a0a0; }
.fields { display: flex; flex-direction: column; gap: 6px; padding: 8px 16px 11px 6px; }
.fg { display: flex; flex-direction: column; gap: 1px; border-radius: 3px; }
.fg label { height: 19px; justify-content: flex-end; }
.fg input { width: 48px; height: 19px; margin-left: 10px; text-align: center; background: #545454; }
.fg label:first-child input { border-radius: 3px 3px 0 0; }
.fg label:last-child input { border-radius: 0 0 3px 3px; }
.fg .ic { margin: 0 10px 0 4px; color: #a8a8a8; }
.fg label > i { width: 4px; height: 4px; border-radius: 50%; background: #e6e6e6; }
.rot { width: 48px; margin-left: 10px; padding: 0 1px 0 6px; display: flex; align-items: center; gap: 0; }
.ptitle.sub { height: 21px; padding-left: 22px; margin-bottom: 1px; }
.open { padding-bottom: 1px; }
.vbar { width: 7px; flex: none; padding: 9px 1px 0 2px; }
.vbar i { display: block; height: 76%; background: #3e3e3e; border-radius: 2px; }

/* Status bar */
.status { height: 22px; flex: none; display: flex; align-items: center; padding: 0 11px 0 10px; gap: 5px; color: #9a9a9a; }
.status kbd { font: inherit; line-height: 13px; height: 15px; width: 32px; text-align: center; font-size: 10px; border: 1px solid #8a8a8a; border-radius: 3px; }
.net { margin-left: auto; }
.ver { border-left: 1px solid #8a8a8a; padding-left: 3px; line-height: 12px; margin-left: 3px; }
```
FILE: viewport.js
```js
// Perspective view of the ground grid, the axes and the default cube.
const svg = document.getElementById("canvas");
const NS = "http://www.w3.org/2000/svg";
const azimuth = Math.atan(0.7042), tilt = Math.PI / 4;
const ca = Math.cos(azimuth), sa = Math.sin(azimuth);
const ct = Math.cos(tilt), st = Math.sin(tilt);
const pan = { x: -1.235, y: 0.625, z: 12.66 };

function toCamera([x, y, z]) {
  return [
    ca * x + sa * y + pan.x,
    -sa * st * x + ca * st * y + ct * z + pan.y,
    -sa * ct * x + ca * ct * y - st * z + pan.z
  ];
}

function draw() {
  svg.replaceChildren();
  const w = svg.clientWidth, h = svg.clientHeight, f = w * 0.697;
  const screen = c => [w / 2 + f * c[0] / c[2], h / 2 - f * c[1] / c[2]];
  const add = (tag, attrs) => {
    const el = document.createElementNS(NS, tag);
    for (const k in attrs) el.setAttribute(k, attrs[k]);
    svg.appendChild(el);
  };
  const line = (a, b, color, width, opacity = 1) => {
    let p = toCamera(a), q = toCamera(b);
    const near = 1;
    if (p[2] < near && q[2] < near) return;
    if (p[2] < near || q[2] < near) {
      const t = (near - p[2]) / (q[2] - p[2]);
      const m = p.map((v, i) => v + (q[i] - v) * t);
      if (p[2] < near) p = m; else q = m;
    }
    const [x1, y1] = screen(p), [x2, y2] = screen(q);
    add("line", { x1, y1, x2, y2, stroke: color, "stroke-width": width, opacity });
  };
  const N = 60;
  for (let i = -N; i <= N; i++) {
    if (i === 0) continue;
    const color = i % 10 === 0 ? "#565656" : "#4a4a4a";
    line([i, -N, 0], [i, N, 0], color, 1.8);
    line([-N, i, 0], [N, i, 0], color, 1.8);
  }
  line([-N, 0, 0], [N, 0, 0], "#9b3947", 1.6);
  line([0, -N, 0], [0, N, 0], "#638b25", 1.8);

  const P = (x, y, z) => screen(toCamera([x, y, z]));
  const face = (pts, fill) => add("polygon", {
    points: pts.map(p => p.join()).join(" "), fill, stroke: "#ff9417", "stroke-width": 1.4
  });
  const A = P(-1, -1, 1), B = P(-1, 1, 1), C = P(1, 1, 1), D = P(1, -1, 1);
  const E = P(-1, -1, -1), F = P(1, -1, -1), G = P(1, 1, -1);
  face([D, C, G, F], "#a66f30");
  face([A, D, F, E], "#b88b62");
  face([A, B, C, D], "#c8a184");
  line([0, -1.9, 0], [0, -1, 0], "#a59335", 1.6, 0.8);
  for (const [x, y] of [A, B, C, D, E, F, G])
    add("rect", { x: x - 2, y: y - 2, width: 4, height: 4, fill: "#ff7a00" });

  const [ox, oy] = P(0, 0, 0);
  add("circle", { cx: ox, cy: oy, r: 11, fill: "none", stroke: "#fff", "stroke-width": 1.2 });
  add("circle", { cx: ox, cy: oy, r: 11, fill: "none", stroke: "#e03030", "stroke-width": 1.2, "stroke-dasharray": "5 5" });
  add("path", { d: `M${ox} ${oy - 15}v8M${ox - 13} ${oy - 9}l7 4M${ox + 13} ${oy - 10}l-6 4`, stroke: "#402a20", fill: "none" });
}

draw();
window.addEventListener("resize", draw);
```
